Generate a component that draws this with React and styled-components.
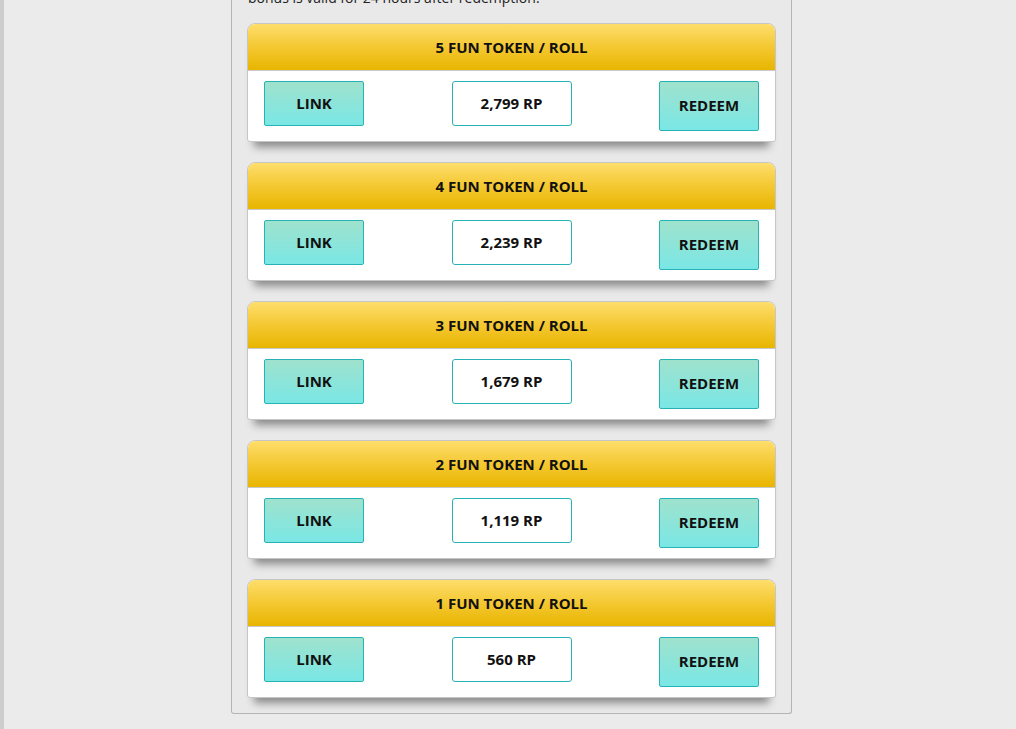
import React from "react";
import styled, { createGlobalStyle } from "styled-components";

const GlobalStyle = createGlobalStyle`
  html, body {
    margin: 0;
    padding: 0;
    background: #ebebeb;
    font-family: "Open Sans", "Liberation Sans", sans-serif;
    overflow: hidden;
  }
`;

const tiers = [
  { tokens: 5, price: "2,799 RP" },
  { tokens: 4, price: "2,239 RP" },
  { tokens: 3, price: "1,679 RP" },
  { tokens: 2, price: "1,119 RP" },
  { tokens: 1, price: "560 RP" },
];

const App = () => {
  return (
    <Page>
      <GlobalStyle />
      <Strip />
      <Main>
        <Panel>
          <Notice>bonus is valid for 24 hours after redemption.</Notice>
          <CardList>
            {tiers.map((t) => (
              <Card key={t.tokens}>
                <CardHeader>{t.tokens} FUN TOKEN / ROLL</CardHeader>
                <CardBody>
                  <ActionButton>LINK</ActionButton>
                  <Price>{t.price}</Price>
                  <ActionButton tall>REDEEM</ActionButton>
                </CardBody>
              </Card>
            ))}
          </CardList>
        </Panel>
      </Main>
    </Page>
  );
};

export default App;

const Page = styled.div`
  display: flex;
  flex-direction: row;
  width: 1016px;
  height: 729px;
  background: #ebebeb;
  overflow: hidden;
`;

const Strip = styled.div`
  width: 4px;
  flex-shrink: 0;
  background: #cdcdcd;
`;

const Main = styled.div`
  flex: 1;
  display: flex;
  justify-content: flex-start;
  padding-left: 227px;
`;

const Panel = styled.div`
  width: 529px;
  margin-top: -12px;
  padding: 0 15px 15px 15px;
  border: 1px solid #b4b4b4;
  border-top: none;
  border-radius: 0 0 3px 3px;
  background: #e9e9e9;
  align-self: flex-start;
`;

const Notice = styled.p`
  margin: 0 0 0 1px;
  height: 21px;
  line-height: 19px;
  font-size: 14px;
  color: #222;
  white-space: nowrap;
`;

const CardList = styled.div`
  display: flex;
  flex-direction: column;
  gap: 20px;
  margin-top: 14px;
`;

const Card = styled.div`
  border: 1px solid #c6c6c6;
  border-radius: 8px 8px 3px 3px;
  background: #fff;
  box-shadow: 0 12px 9px -7px rgba(0, 0, 0, 0.42);
`;

const CardHeader = styled.div`
  height: 45px;
  padding-bottom: 1px;
  display: flex;
  align-items: center;
  justify-content: center;
  border-radius: 7px 7px 0 0;
  border-bottom: 1px solid #c9c9c9;
  background: linear-gradient(to bottom, #fede6c 0%, #f4c832 50%, #e8b500 100%);
  font-size: 15px;
  font-weight: 700;
  color: #111;
`;

const CardBody = styled.div`
  display: flex;
  flex-direction: row;
  justify-content: space-between;
  align-items: flex-start;
  padding: 10px 16px 10px 16px;
  height: 50px;
`;

const ActionButton = styled.div`
  width: 98px;
  height: ${(p) => (p.tall ? "46px" : "41px")};
  padding-bottom: 2px;
  display: flex;
  align-items: center;
  justify-content: center;
  border: 1px solid #27b3b6;
  border-radius: 2px;
  background: linear-gradient(to bottom, #9fe2cd 0%, #7ae7e5 100%);
  font-size: 15px;
  font-weight: 700;
  color: #111;
  cursor: pointer;
`;

const Price = styled.div`
  width: 118px;
  height: 41px;
  padding-bottom: 2px;
  display: flex;
  align-items: center;
  justify-content: center;
  border: 1px solid #27b3b6;
  border-radius: 3px;
  background: #fff;
  font-size: 15px;
  font-weight: 700;
  color: #111;
`;
